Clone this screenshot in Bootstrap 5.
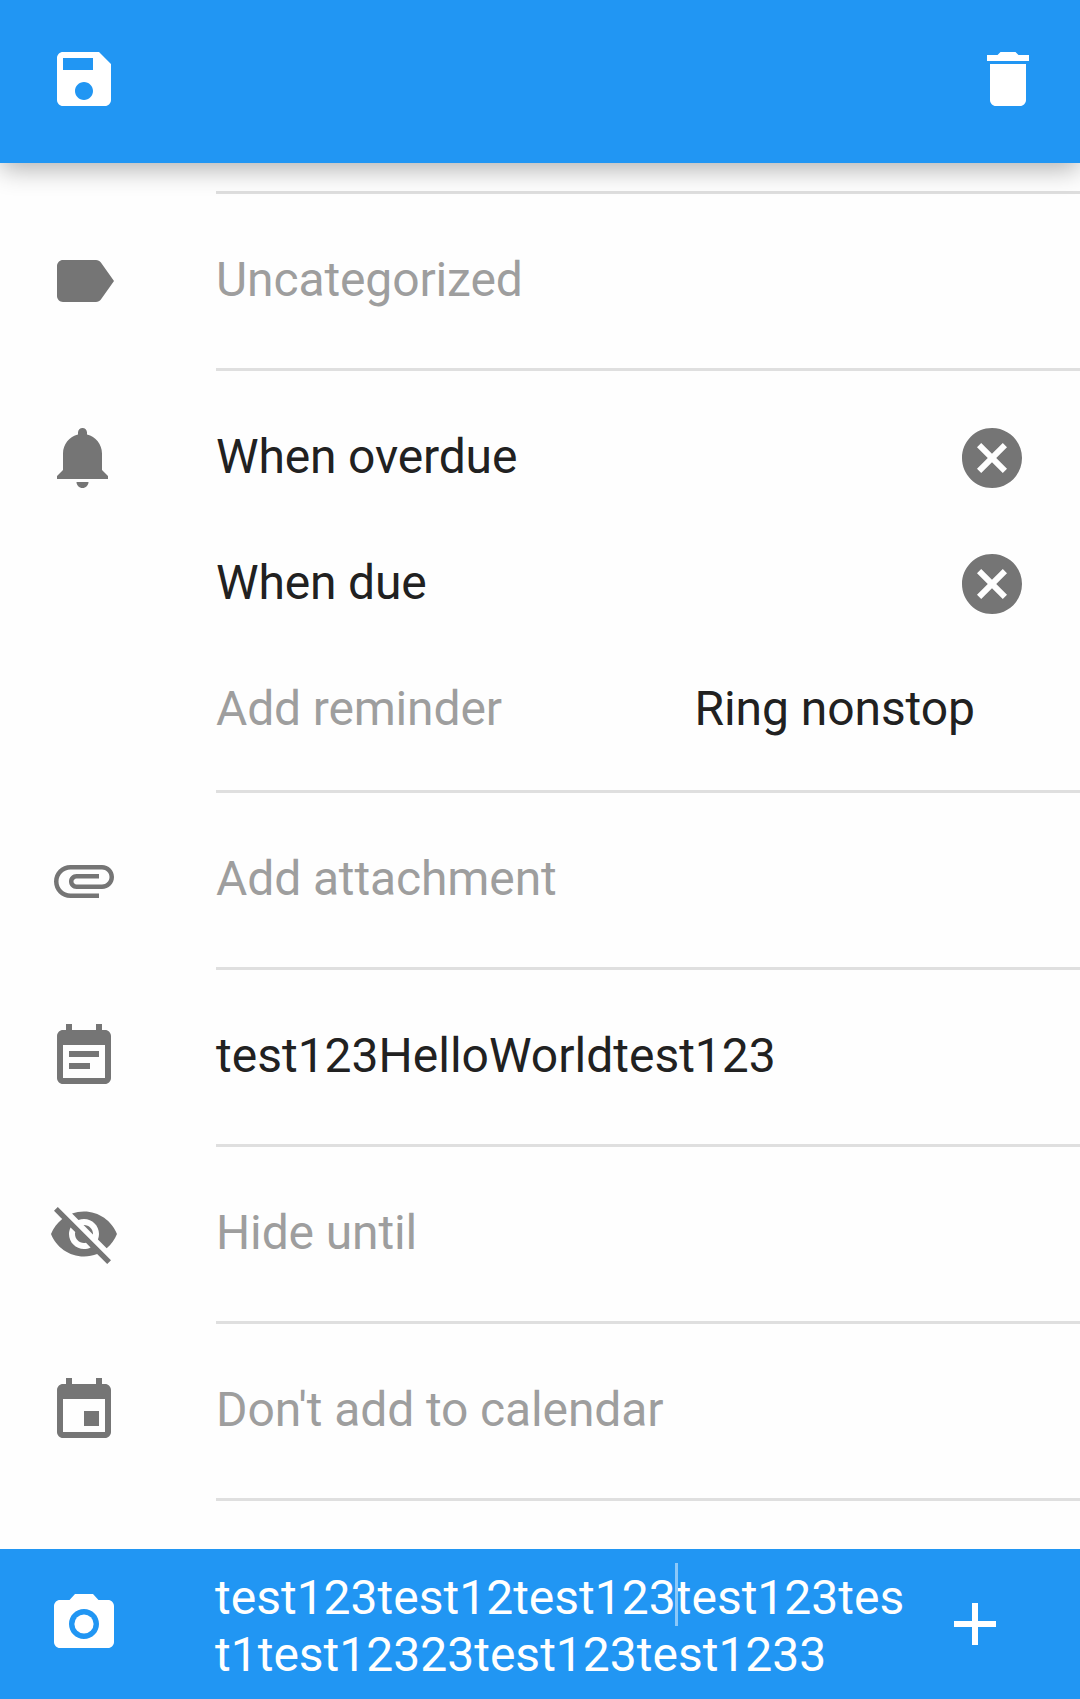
<!DOCTYPE html>
<html lang="en">
<head>
<meta charset="utf-8">
<meta name="viewport" content="width=device-width, initial-scale=1">
<title>Edit task</title>
<link href="https://cdn.jsdelivr.net/npm/bootstrap@5.3.0/dist/css/bootstrap.min.css" rel="stylesheet">
<style>
  body { font-family: Roboto, "Noto Sans", sans-serif; font-size: 48px; line-height: 57px; color: #212121; background: #fefefe; }
  .screen { height: 1699px; }
  .bar { background: #2196f3; color: #fff; }
  .topbar { height: 163px; padding: 0 36px 5px 48px; box-shadow: 0 7px 24px -1px rgba(0,0,0,.31); }
  .bottombar { height: 150px; }
  .glyph { width: 72px; height: 72px; fill: currentColor; display: block; flex: none; }
  .lead-col { width: 216px; padding-left: 48px; color: #757575; flex: none; }
  .bar .lead-col { color: #fff; width: 215px; padding-left: 47.5px; }
  .field { height: 177px; }
  .field-body, .reminders { border-bottom: 3px solid #dfdfdf; }
  .field-body > span, .line > span { margin-top: -3px; white-space: nowrap; }
  .top-rule { height: 31px; margin-left: 216px; border-bottom: 3px solid #dedede; }
  .reminders { padding: 24px 0 17px; }
  .line { height: 126px; }
  .line > span { letter-spacing: -.16px; }
  .bell { padding-top: 51px; }
  .clear { margin-right: 52px; color: #757575; }
  .line > .ring { margin-right: 105px; letter-spacing: -.06px; }
  .hint { color: #9e9e9e; letter-spacing: -.12px; }
  .caret { top: -6px; left: -1px; width: 3px; height: 63px; background: #8cc8f9; }
  .plus { margin-right: 69px; }
  .title { margin-top: 4px; white-space: nowrap; }
  button { color: inherit; }
</style>
<script src="https://cdn.jsdelivr.net/npm/bootstrap@5.3.0/dist/js/bootstrap.bundle.min.js"></script>
</head>
<body>
<div class="screen d-flex flex-column overflow-hidden">
  <header class="bar topbar d-flex align-items-center justify-content-between flex-shrink-0 position-relative">
    <button class="border-0 bg-transparent p-0" aria-label="Save"><svg class="glyph" viewBox="0 0 24 24"><path fill-rule="evenodd" d="M17 3H5c-1.11 0-2 .9-2 2v14c0 1.1.89 2 2 2h14c1.1 0 2-.9 2-2V7l-4-4zm-5 16c-1.66 0-3-1.34-3-3s1.34-3 3-3 3 1.34 3 3-1.34 3-3 3zm3-10H5V5h10v4z"/></svg></button>
    <button class="border-0 bg-transparent p-0" aria-label="Delete"><svg class="glyph" viewBox="0 0 24 24"><path d="M6 19c0 1.100.9 2 2 2h8c1.100 0 2-.9 2-2V7H6v12zM19 4h-3.500l-1-1h-5l-1 1H5v2h14V4z"/></svg></button>
  </header>

  <main class="flex-grow-1">
    <div class="top-rule"></div>

    <div class="field d-flex">
      <div class="lead-col d-flex align-items-center pb-1"><svg class="glyph" viewBox="0 0 24 24"><path d="M17.630 5.840C17.270 5.330 16.670 5 16 5L5 5.010C3.900 5.010 3 5.900 3 7v10c0 1.100.9 1.990 2 1.990L16 19c.67 0 1.270-.33 1.630-.84L22 12l-4.370-6.160z"/></svg></div>
      <div class="field-body d-flex align-items-center flex-grow-1"><span class="hint">Uncategorized</span></div>
    </div>

    <div class="d-flex">
      <div class="lead-col bell"><svg class="glyph" viewBox="0 0 24 24"><path d="M11.500 22c1.100 0 2-.9 2-2h-4c0 1.100.9 2 2 2zm6.500-6v-5.500c0-3.070-2.130-5.640-5-6.320V3.500c0-.83-.67-1.500-1.500-1.500S10 2.670 10 3.500v.68c-2.870.68-5 3.250-5 6.320V16l-2 2v1h17v-1l-2-2z"/></svg></div>
      <div class="reminders flex-grow-1">
        <div class="line d-flex align-items-center justify-content-between"><span>When overdue</span>
          <button class="clear border-0 bg-transparent p-0" aria-label="Remove"><svg class="glyph" viewBox="0 0 24 24"><path d="M12 2C6.470 2 2 6.470 2 12s4.470 10 10 10 10-4.470 10-10S17.530 2 12 2zm5 13.590L15.590 17 12 13.410 8.410 17 7 15.590 10.590 12 7 8.410 8.410 7 12 10.590 15.590 7 17 8.410 13.410 12 17 15.590z"/></svg></button></div>
        <div class="line d-flex align-items-center justify-content-between"><span>When due</span>
          <button class="clear border-0 bg-transparent p-0" aria-label="Remove"><svg class="glyph" viewBox="0 0 24 24"><path d="M12 2C6.470 2 2 6.470 2 12s4.470 10 10 10 10-4.470 10-10S17.530 2 12 2zm5 13.590L15.590 17 12 13.410 8.410 17 7 15.590 10.590 12 7 8.410 8.410 7 12 10.590 15.590 7 17 8.410 13.410 12 17 15.590z"/></svg></button></div>
        <div class="line d-flex align-items-center justify-content-between"><span class="hint">Add reminder</span><span class="ring">Ring nonstop</span></div>
      </div>
    </div>

    <div class="field d-flex">
      <div class="lead-col d-flex align-items-center pb-1"><svg class="glyph" viewBox="0 0 24 24"><path d="M7.500 18C4.460 18 2 15.540 2 12.500S4.460 7 7.500 7H18c2.210 0 4 1.790 4 4s-1.790 4-4 4H9.500C8.120 15 7 13.880 7 12.500S8.120 10 9.500 10H17v1.500H9.500c-.55 0-1 .45-1 1s.45 1 1 1H18c1.380 0 2.500-1.120 2.500-2.500S19.380 8.500 18 8.500H7.500c-2.210 0-4 1.790-4 4s1.790 4 4 4H17V18H7.500z"/></svg></div>
      <div class="field-body d-flex align-items-center flex-grow-1"><span class="hint">Add attachment</span></div>
    </div>

    <div class="field d-flex">
      <div class="lead-col d-flex align-items-center pb-1"><svg class="glyph" viewBox="0 0 24 24"><path d="M17 10H7v2h10v-2zm2-7h-1V1h-2v2H8V1H6v2H5c-1.110 0-1.990.9-1.990 2L3 19c0 1.100.89 2 2 2h14c1.100 0 2-.9 2-2V5c0-1.100-.9-2-2-2zm0 16H5V8h14v11zm-5-5H7v2h7v-2z"/></svg></div>
      <div class="field-body d-flex align-items-center flex-grow-1"><span>test123HelloWorldtest123</span></div>
    </div>

    <div class="field d-flex">
      <div class="lead-col d-flex align-items-center pb-1"><svg class="glyph" viewBox="0 0 24 24"><path d="M12 7c2.760 0 5 2.240 5 5 0 .65-.13 1.260-.36 1.830l2.920 2.920c1.510-1.260 2.700-2.890 3.430-4.750-1.730-4.390-6-7.500-11-7.500-1.400 0-2.740.25-3.980.7l2.160 2.160C10.740 7.130 11.350 7 12 7zM2 4.270l2.280 2.280.46.46C3.080 8.300 1.780 10.020 1 12c1.730 4.390 6 7.500 11 7.500 1.550 0 3.030-.3 4.380-.84l.42.42L19.730 22 21 20.730 3.270 3 2 4.270zM7.530 9.800l1.550 1.550c-.05.21-.08.43-.08.65 0 1.660 1.340 3 3 3 .22 0 .44-.03.65-.08l1.550 1.550c-.67.33-1.410.53-2.200.53-2.760 0-5-2.240-5-5 0-.79.2-1.530.53-2.200zm4.310-.78l3.150 3.150.02-.16c0-1.660-1.340-3-3-3l-.17.010z"/></svg></div>
      <div class="field-body d-flex align-items-center flex-grow-1"><span class="hint">Hide until</span></div>
    </div>

    <div class="field d-flex">
      <div class="lead-col d-flex align-items-center pb-1"><svg class="glyph" viewBox="0 0 24 24"><path d="M17 12h-5v5h5v-5zM16 1v2H8V1H6v2H5c-1.110 0-1.990.9-1.990 2L3 19c0 1.100.89 2 2 2h14c1.100 0 2-.9 2-2V5c0-1.100-.9-2-2-2h-1V1h-2zm3 18H5V8h14v11z"/></svg></div>
      <div class="field-body d-flex align-items-center flex-grow-1"><span class="hint">Don't add to calendar</span></div>
    </div>
  </main>

  <footer class="bar bottombar d-flex align-items-center flex-shrink-0">
    <div class="lead-col"><svg class="glyph" viewBox="0 0 24 24"><circle cx="12" cy="12" r="3.200"/><path d="M9 2L7.170 4H4c-1.100 0-2 .9-2 2v12c0 1.100.9 2 2 2h16c1.100 0 2-.9 2-2V6c0-1.100-.9-2-2-2h-3.170L15 2H9zm3 15c-2.760 0-5-2.240-5-5s2.240-5 5-5 5 2.240 5 5-2.240 5-5 5z"/></svg></div>
    <div class="title flex-grow-1">test123test12test123<span class="position-relative"><i class="caret position-absolute"></i></span>test123tes<br>t1test12323test123test1233</div>
    <button class="plus border-0 bg-transparent p-0" aria-label="Add comment"><svg class="glyph" viewBox="0 0 24 24"><path d="M19 13h-6v6h-2v-6H5v-2h6V5h2v6h6v2z"/></svg></button>
  </footer>
</div>
</body>
</html>
